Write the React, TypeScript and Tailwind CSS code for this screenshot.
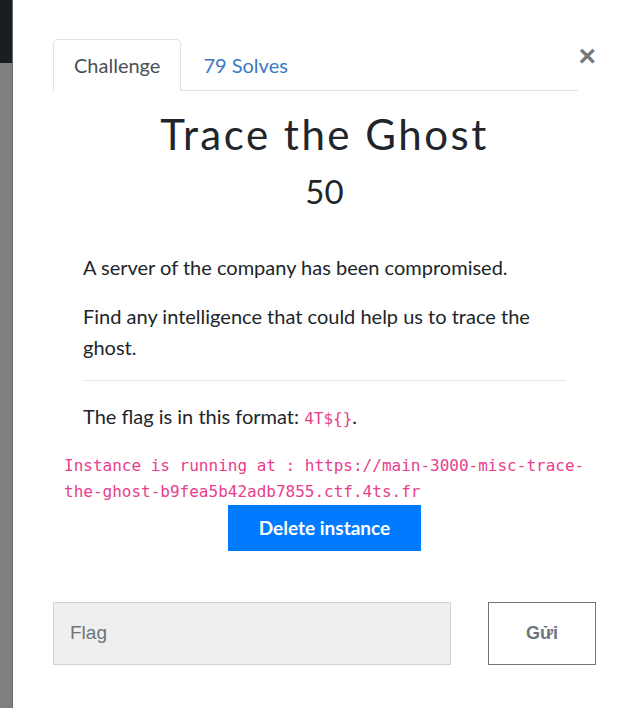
export default function App() {
  return (
    <div className="flex h-[708px] w-[630px] overflow-hidden bg-white text-[#212529]" style={{ fontFamily: "Lato, 'Noto Sans', sans-serif" }}>
      <div className="flex w-[13px] shrink-0 flex-col border-r border-[#6a6a6a]">
        <div className="h-[63px] bg-[#1b1e21]"></div>
        <div className="flex-1 bg-[#7f7f7f]"></div>
      </div>
      <div className="w-[543px] shrink-0 ml-[40px]">
        <div className="mt-[39px] flex items-start">
          <div className="flex flex-1 border-b border-[#dee2e6] text-[20px] leading-[28px]">
            <div className="-mb-px rounded-t-[5px] border border-b-0 border-[#dee2e6] bg-white px-[20px] pb-[12px] pt-[11px] text-[#495057]">
              Challenge
            </div>
            <div className="px-[22px] pb-[11px] pt-[12px] text-[#3a7abd]">79 Solves</div>
          </div>
          <div className="mt-[2px] w-[18px] text-right text-[30px] font-bold leading-[30px] text-[#777]" style={{ fontFamily: "'Liberation Sans', sans-serif" }}>
            ×
          </div>
        </div>
        <h2 className="mt-[19px] text-center text-[42px] leading-[48px] tracking-[2.5px] text-[#212529]">Trace the Ghost</h2>
        <div className="mt-[13px] text-center text-[33px] leading-[40px]">50</div>
        <div className="mt-[41px] px-[30px] text-[20px] leading-[31px]">
          <p>A server of the company has been compromised.</p>
          <p className="mt-[18px]">Find any intelligence that could help us to trace the ghost.</p>
          <div className="mt-[17px] h-px bg-[#e5e5e5]"></div>
          <p className="mt-[20px]">
            The flag is in this format:{" "}
            <code className="text-[16px] text-[#e83e8c]" style={{ fontFamily: "'DejaVu Sans Mono', monospace" }}>4T$&#123;&#125;</code>.
          </p>
        </div>
        <div className="mt-[19px] pl-[11px] text-[16px] leading-[26px] text-[#e83e8c]" style={{ fontFamily: "'DejaVu Sans Mono', monospace" }}>
          Instance is running at : https://main-3000-misc-trace-the-ghost-b9fea5b42adb7855.ctf.4ts.fr
        </div>
        <div className="flex justify-center">
          <button className="h-[46px] w-[193px] bg-[#007bff] text-[19px] font-bold text-white">Delete instance</button>
        </div>
        <div className="mt-[51px] flex justify-between">
          <div className="flex h-[63px] w-[398px] items-center border border-[#ced4da] bg-[#efefef] pl-[16px] text-[19px] text-[#6c757d]" style={{ fontFamily: "'Liberation Sans', sans-serif" }}>
            Flag
          </div>
          <button className="h-[63px] w-[108px] border border-[#6c757d] bg-white text-[18px] font-bold text-[#6c757d]" style={{ fontFamily: "'Liberation Sans', sans-serif" }}>
            Gửi
          </button>
        </div>
      </div>
    </div>
  );
}
